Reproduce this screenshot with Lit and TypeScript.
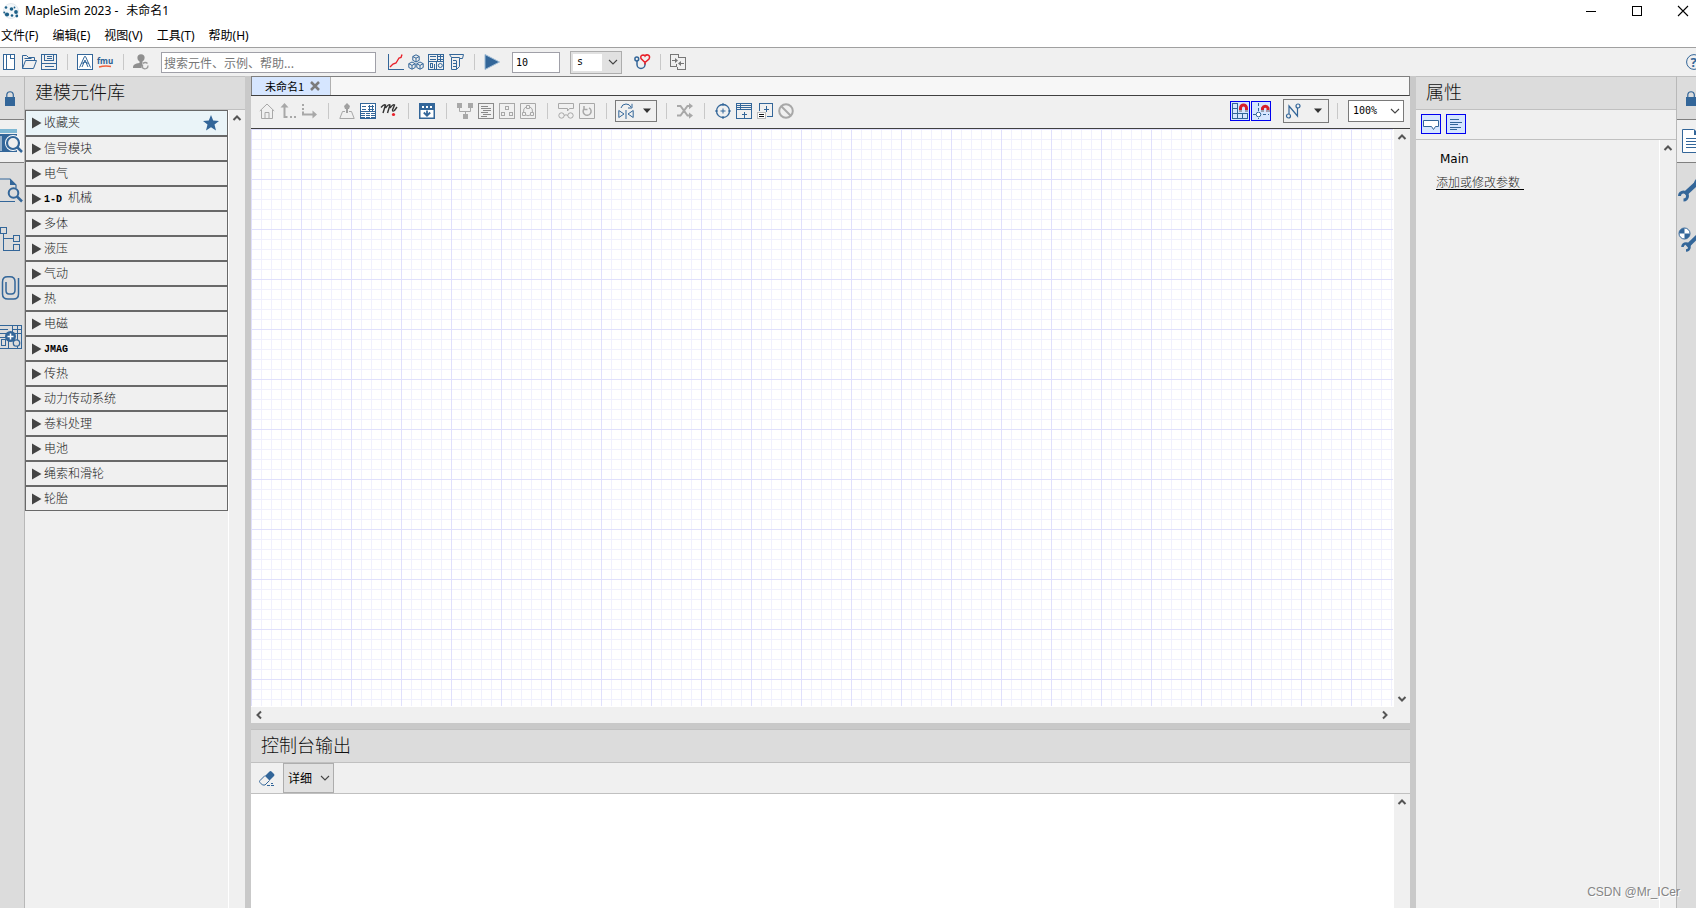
import { LitElement, html, svg, css, TemplateResult, SVGTemplateResult } from "lit";
import { customElement, property } from "lit/decorators.js";

type Glyph = SVGTemplateResult;

/* 16px toolbar glyphs */
const G: Record<string, Glyph> = {
  newDoc: svg`<g class="b c"><rect x="2.5" y="0.5" width="11" height="15" fill="#fff"/><path d="M5.5 1v14M9.5 .5v4h4"/></g>`,
  open: svg`<g class="b"><path d="M1.5 14.5v-13h4l2 2h6v3M1.500 14.500l3-8h11l-3 8zM3.500 4.500h7"/></g>`,
  save: svg`<g class="b c"><path d="M.5.5h15v15H.5zM3.500.5v6h9v-6M5.500 2.500h5M5.500 4.500h5M.5 9.500h15M3.500 12.500h9"/></g>`,
  mapleA: svg`<rect class="b" x=".5" y=".5" width="15" height="15" fill="#fff"/><path class="b" d="M2.500 13.500l5-11h1l5 11M5 13l3-7 3 7M4.500 9.500q3.500-3 7 0"/>`,
  fmu: svg`<text x="0" y="10" font-size="8" font-weight="700" font-family="Open Sans" fill="#2b5f93">fmu</text><path d="M2 13q6-1.500 12-.5" stroke="#f0603c" stroke-width="1.500" fill="none"/>`,
  user: svg`<circle cx="8" cy="3.800" r="3.600" fill="#8f8f8f"/><path d="M6.500 6h3v3l-1 5H0c0-3.500 2-4.500 6.500-5z" fill="#8f8f8f"/><path d="M10 9.500a3 3 0 0 1 4.500 0M15 11.500a3 3 0 0 1-5 2.500M9.500 10.500v4" fill="none" stroke="#999" stroke-width="1.300"/>`,
  chart: svg`<path class="b c" d="M.5 0v15.500H16"/><path d="M2 13l3-3 3-1 3-5 2-.5L14 .5" fill="none" stroke="#e8202a" stroke-width="1.400"/>`,
  cubes: svg`<g class="b"><path d="M8 .8l3.200 1.700v3.800L8 8 4.800 6.300V2.500zM4.800 2.500L8 4.200l3.200-1.700M8 4.200V8"/><path d="M4 8l3.200 1.700v3.800L4 15.200.8 13.500V9.700zM.8 9.700L4 11.400l3.200-1.700M4 11.400v3.800M12 8l3.200 1.700v3.800L12 15.200l-3.200-1.700V9.700zM8.800 9.700l3.200 1.700 3.200-1.700M12 11.400v3.800"/></g>`,
  panel: svg`<g class="b c"><path d="M.5.5h15v15H.5zM.5 7.500h15M9.500.5v7M12.500.5v7M2 2.500h6M2 5.500h6M9.500 2.500h6M9.500 5.500h6M2.500 9.500h2v4h-2zM6.500 9.500v5M8.500 7.500v8"/></g><circle class="b" cx="12.300" cy="11.500" r="2"/>`,
  scroll: svg`<g class="b"><path d="M1.500.5h14l-1 4h-3v8l-3 3H3.500V3.500L1.500.5M3.500 3.500h8v1M8.500 15.500v-9M5 6.500h3M5 9.500h3M5 12.500h3"/></g>`,
  play: svg`<path d="M1 .5v15L15.500 8z" fill="#336699"/><path d="M1 .5v15L15.500 8z" fill="none" stroke="#9dbbd6"/>`,
  steth: svg`<g class="b" stroke-width="1.500"><circle cx="2.800" cy="5" r="1.900"/><path d="M3 7v3.500a4 4 0 0 0 8 0V9"/></g><path d="M11 8.500L7 4.500q-1-3 2-3.500 1.500 0 2 1 1-1.500 3-1 2.500 1 1 4zM11 8.500v2" fill="none" stroke="#e8202a" stroke-width="1.500"/>`,
  swap: svg`<g fill="none" stroke="#777" class="c"><path d="M6.500 12.500h-6v-12h8v3M6.500 12.500V9.500M8.500 3.500h7v12h-8v-3M2 6.500h4M10 9.500h4"/></g><path d="M5 4l3 2.500L5 9zM11 7L8 9.500 11 12z" fill="#777"/>`,
  home: svg`<g class="g"><path d="M.8 8L8 1l7.200 7M2.500 7v8.500h11V7M6 15.500v-6h4v6"/></g>`,
  up: svg`<path class="g" stroke-width="2" d="M4.500 3v11h3"/><path d="M4.500 0l4 4.500h-8zM10 13h2v2h-2zM14 13h2v2h-2z" fill="#a8a8a8"/>`,
  down: svg`<path d="M1 1h2v2H1zM1 5h2v2H1zM11.500 7.500L16 11.500l-4.500 4z" fill="#a8a8a8"/><path class="g" stroke-width="2" d="M2 8.500v3h10"/>`,
  tree: svg`<path d="M8 0l3 3-1 3H9v4H7V6H6L5 3z" fill="#a0a0a0"/><path class="g" d="M6 8.500H3.500L.8 15.500h14.400L12.500 8.500H10"/>`,
  props: svg`<rect width="16" height="16" fill="#336699"/><path d="M1 1h14v7H1z" fill="#fff"/><path class="c" d="M2 3.500h4M2 6.500h4M8 3.500h6M8 6.500h6M9.500 2v6M12.500 2v6" stroke="#336699" fill="none"/><path class="c" d="M1 9.500h14M1 11.500h14M1 13.500h14M5.500 9v6M10.500 9v6" stroke="#fff" fill="none"/>`,
  script: svg`<path d="M0 4.500Q3 1 4.500 2L2 10M4.500 5Q8 .5 9 2L6.500 10M9 5Q12.500.5 13.500 2L11.500 7q0 2 2 .5L16 4" fill="none" stroke="#333" stroke-width="1.400"/><circle cx="12.500" cy="11.500" r="1.600" fill="#e8202a"/>`,
  collapse: svg`<path d="M0 0h16v16H0z" fill="#336699"/><path d="M1.500 7h13v7.500h-13z" fill="#fff"/><path d="M3 3h2v2H3zM7 3h2v2H7zM11 3h2v2h-2z" fill="#fff"/><path d="M8 7.500v5M4.800 9.500L8 12.700l3.200-3.200" stroke="#336699" stroke-width="1.800" fill="none"/>`,
  nodes: svg`<path d="M0 0h5v5H0zM11 0h5v5h-5zM6 11h5v5H6z" fill="#a8a8a8"/><path class="g" d="M2.500 5v3.500h11V5M8.500 8.500V11"/>`,
  text: svg`<g stroke="#8a8a8a" fill="none" class="c"><path d="M.5.5h15v15H.5zM3 3.500h7M3 5.500h10M5 7.500h8M3 9.500h7M5 11.500h8M3 13.500h6"/></g>`,
  boxes: svg`<g class="g c"><path d="M.5.5h15v15H.5zM6.500 3.500h3v3h-3zM2.500 9.500h3v3h-3zM10.500 9.500h3v3h-3z"/></g>`,
  linked: svg`<g class="g"><path d="M.5.5h15v15H.5zM6.500 2.500h3v3h-3zM2.500 9.500h3v3h-3zM10.500 9.500h3v3h-3zM6 4q-3 1-2.500 5.500M10 4q3 1 2.500 5.500M6 12q2 1.500 4 0"/></g>`,
  glasses: svg`<g class="g"><path d="M.5.5h15v5h-4L9.500 8V5.500h-9zM6 12.500q2-1.500 4 0"/><circle cx="3.500" cy="12.500" r="2.700"/><circle cx="12.500" cy="12.500" r="2.700"/></g>`,
  reload: svg`<path class="g" d="M.5.5h15v15H.5z"/><path class="g" stroke-width="1.500" d="M10 4.800a4 4 0 1 1-4.500.5M5 3v3.500h3.500"/>`,
  mirror: svg`<g class="b"><path d="M.8 7.500v7L6 11zM15.200 7.500v7L10 11zM8 7v9M3 5q1-4 5-4 3.500 0 5 3M14 .8V5h-4"/></g>`,
  shuffle: svg`<path d="M0 3h3.500l7 9.500H13M0 12.500h3.500l7-9.500H13" fill="none" stroke="#a8a8a8" stroke-width="2"/><path d="M12 0l4 3-4 3.300zM12 9.500l4 3-4 3.300z" fill="#a8a8a8"/>`,
  target: svg`<g class="b"><circle cx="8" cy="8" r="6.500" stroke-width="1.300"/><path d="M8 0v3M8 13v3M0 8h3M13 8h3M8 5.500v5M5.500 8h5"/></g>`,
  tableAdd: svg`<g class="b c"><path d="M.5.5h15v15H.5zM.5 2.500h15M.5 4.500h15M.5 6.500h15M4.500.5v6M8.500 8.500v6M6 11.500h5"/></g>`,
  eqAdd: svg`<g class="b c"><path d="M2.500 8V.5h13v13H10M9.500 3v6M7 6.500h5"/></g><rect x=".5" y="9.500" width="8" height="6" fill="#fff" stroke="#bbb"/><path d="M2 11.500h5M2 13.500h5" stroke="#111"/>`,
  none: svg`<circle cx="8" cy="8" r="6.800" fill="none" stroke="#a8a8a8" stroke-width="2"/><path d="M3.500 3.500l9 9" stroke="#a8a8a8" stroke-width="2"/>`,
  gridSnap: svg`<g class="b c"><path d="M.5.5h5v15h-5zM.5 5.500h5M.5 10.500h15v5H.5zM10.500 10.500v5"/></g><path d="M8.500 9V5a3 3 0 0 1 6 0v4" fill="none" stroke="#d81e28" stroke-width="3"/><path d="M8.500 7v2M14.500 7v2" stroke="#9aa4b4" stroke-width="3"/>`,
  lineSnap: svg`<path class="b" stroke-dasharray="3 2" d="M5.500 0v16M0 11.500h16"/><circle cx="5.500" cy="11.500" r="2.300" class="b" fill="#fff"/><path d="M9.500 9V5a3 3 0 0 1 5.500 0v4" fill="none" stroke="#d81e28" stroke-width="3"/><path d="M9.500 7v2M15 7v2" stroke="#9aa4b4" stroke-width="3"/>`,
  route: svg`<g class="b" stroke-width="1.200"><path d="M3 11V3l8.500 10V5"/><circle cx="2.500" cy="13" r="2"/><circle cx="12" cy="3" r="2"/></g>`,
  callout: svg`<path class="b" fill="#fff" d="M.5 4.500h15v6h-3l-2 3-2-3h-8z"/>`,
  lines: svg`<path class="b c" d="M2 3.500h9M2 6.500h12M2 8.500h8M2 11.500h11M2 13.500h7"/>`,
  eraser: svg`<path d="M6 6l4.500-4.500q1-1 2 0l2.500 2.500q1 1 0 2L10.500 10.500z" fill="#336699"/><path class="b" d="M6 5.500L1 10.500q-1 1 0 2l2.500 2.500h2.500L10.500 10.500"/><path class="b" d="M8 15.500h8M12 13.500h2" stroke-dasharray="3 1"/>`,
  star: svg`<path d="M8 0l2.200 5.600 5.800.3-4.500 3.700L13 15.500 8 12.200 3 15.500l1.500-5.900L0 5.900l5.800-.3z" fill="#336699"/>`,
  close: svg`<path d="M4 4l8 8M12 4l-8 8" stroke="#7c7c7c" stroke-width="2.500"/>`,
  help: svg`<circle class="b" cx="8" cy="8" r="7.400"/><text x="4.500" y="13" font-size="13" font-weight="700" font-family="Open Sans" fill="#336699">?</text>`,
  min: svg`<path d="M3 8.500h10" stroke="#000" class="c"/>`,
  max: svg`<path d="M3.500 3.500h9v9h-9z" stroke="#000" fill="none" class="c"/>`,
  quit: svg`<path d="M3 3l10 10M13 3L3 13" stroke="#000" stroke-width="1.100"/>`,
  logo: svg`<circle cx="8" cy="8" r="7.500" fill="#f3f7fa" stroke="#d5dde5" stroke-width=".6"/><g fill="#1d6088"><circle cx="3" cy="4.500" r="1.300"/><circle cx="8.500" cy="6" r="1.800"/><circle cx="13" cy="9" r="1.900"/><circle cx="4" cy="11.500" r="2.100"/><circle cx="9" cy="12.500" r="1.300"/><circle cx="13.800" cy="13" r="1.400"/><circle cx="1.300" cy="9.500" r="1"/><circle cx="11.500" cy="4.500" r=".9"/></g>`,
  arrowUp: svg`<path d="M4.500 10L8 6.500l3.500 3.500" fill="none" stroke="#555" stroke-width="2"/>`,
  arrowDown: svg`<path d="M4.500 6L8 9.500 11.500 6" fill="none" stroke="#555" stroke-width="2"/>`,
  arrowLeft: svg`<path d="M10 4.500L6.500 8l3.500 3.500" fill="none" stroke="#555" stroke-width="2"/>`,
  arrowRight: svg`<path d="M6 4.500L9.500 8 6 11.500" fill="none" stroke="#555" stroke-width="2"/>`,
  chevron: svg`<path d="M4 6l4 4 4-4" fill="none" stroke="#444" stroke-width="1.100"/>`,
  caret: svg`<path d="M4 5.500h8L8 10z" fill="#333"/>`,
  tri: svg`<path d="M4 2.500v11L13.500 8z" fill="#444"/>`,
};

/* 24px glyphs of the two side rails */
const R: Record<string, Glyph> = {
  lock: svg`<path d="M6.800 12V8.500a3.300 3.300 0 0 1 6.500 0V12" fill="none" stroke="#336699" stroke-width="1.200"/><path d="M5 11h10v9H5z" fill="#336699"/>`,
  lockRight: svg`<path d="M10.800 12V8.500a3.300 3.300 0 0 1 6.500 0V12" fill="none" stroke="#336699" stroke-width="1.200"/><path d="M9 11h10v9H9z" fill="#336699"/>`,
  library: svg`<path d="M0 0h17v4H0z" fill="#7fb8d4"/><path d="M0 5h17v1H0zM0 6h7v17H0z" fill="#336699"/><path d="M1 7v15" stroke="#fff"/><path d="M7 6h10v17H7z" fill="#336699"/><circle cx="13" cy="14" r="6" fill="#efefef" stroke="#fff" stroke-width="4"/><circle cx="13" cy="14" r="6" fill="#efefef" stroke="#336699" stroke-width="2.200"/><path d="M17 18l5 5" stroke="#336699" stroke-width="2.500"/>`,
  project: svg`<path d="M0 1h10l6 6v3M0 23.500h15" fill="none" stroke="#336699" stroke-width="1.200"/><path d="M10 1v6h6z" fill="#336699"/><circle cx="13.500" cy="15" r="4.800" fill="none" stroke="#336699" stroke-width="2"/><path d="M17 18.500l5 5" stroke="#336699" stroke-width="2.500"/>`,
  hierarchy: svg`<g class="b c"><path d="M.5.5h6v6h-6zM13.500 8.500h6v6h-6zM13.500 17.500h6v6h-6zM3.500 7v16.500h10M3.500 11.500h10"/></g>`,
  clip: svg`<path class="b" stroke-width="1.500" d="M18.500 2v16q0 5-5 5H8q-5.500 0-5.500-5V6q0-5.200 5-5.200h2.500q5 0 5 5V14q0 4-3.500 4h-2.500Q6 18 6 14.500V6"/>`,
  addParts: svg`<g class="b c"><path d="M0 .5h21.500v23H0M0 4.500h8M0 8.500h8M12.500.5v7M17.500.5v23M13 4.500h8M13 8.500h8M1.500 14.500h4v6h-4zM8.500 16v8M0 12.500h6"/></g><circle cx="10.500" cy="11.500" r="5.500" fill="#336699"/><path d="M7.500 11.500h6M10.500 8.500v6" stroke="#fff" stroke-width="1.500"/><circle cx="16.500" cy="18" r="3.200" fill="#dcdcdc" stroke="#336699" stroke-width="1.300"/>`,
  sheet: svg`<path d="M5.500.5h11l6 6v17h-17z" fill="#fff" stroke="#336699"/><path d="M17 0v6h6z" fill="#336699"/><path class="b c" d="M9 9.500h14M9 12.500h14M9 15.500h14M9 18.500h14"/>`,
  wrench: svg`<path d="M8 16L20 5" stroke="#336699" stroke-width="4.500"/><path d="M19 1q-3 3-2 7l7 1" fill="#336699"/><path d="M10.500 18a4 4 0 1 1-4-4" fill="none" stroke="#336699" stroke-width="3" transform="rotate(180 6.500 18)"/>`,
  wheelWrench: svg`<circle cx="7.500" cy="6.500" r="5.500" fill="#fff" stroke="#336699"/><path d="M7.500 6.500V1a5.500 5.500 0 0 0-5.500 5.500zM7.500 6.500V12A5.500 5.500 0 0 0 13 6.500z" fill="#336699"/><path d="M10 19.500L23 7" stroke="#336699" stroke-width="4"/><path d="M12.500 20a3.500 3.500 0 1 1-3.500-3.500" fill="none" stroke="#336699" stroke-width="2.600" transform="rotate(180 9 20)"/>`,
};

const base = css`
  :host { box-sizing: border-box; }
  *, *::before { box-sizing: border-box; }
  svg { display: block; flex: none; overflow: visible; }
  .b { stroke: #336699; }
  .b:not([fill]) { fill: none; }
  .b path:not([fill]), .b circle:not([fill]) { fill: none; }
  .g { stroke: #a8a8a8; fill: none; }
  .c { shape-rendering: crispEdges; }
  button {
    border: 0; padding: 0; margin: 0; background: none; font: inherit; color: inherit;
    display: flex; align-items: center; justify-content: center;
  }
`;

const icon = (g: Glyph, size = 16): TemplateResult =>
  html`<svg width=${size} height=${size} viewBox="0 0 ${size} ${size}" aria-hidden="true">${g}</svg>`;

const tool = (name: string, label: string, cls = "tool"): TemplateResult =>
  html`<button class=${cls} aria-label=${label} title=${label}>${icon(G[name])}</button>`;

const sep = html`<span class="sep"></span>`;

@customElement("side-rail")
class SideRail extends LitElement {
  @property({ attribute: false }) items: [string, string][] = [];
  static styles = [base, css`
    :host { display: flex; flex-direction: column; background: #dcdcdc; overflow: hidden; border-top: 1px solid #c0c0c0; }
    button { height: 49px; width: 24px; flex: none; }
    .lock { height: 42px; }
    .active { height: 44px; width: 100%; justify-content: flex-start; background: #f0f0f0; border: solid #808080; border-width: 1px 0; margin-bottom: 2px; }
  `];
  render() {
    return this.items.map(([name, label], i) =>
      html`<button class=${i === 0 ? "lock" : i === 1 ? "active" : ""} aria-label=${label} title=${label}>${icon(R[name], 24)}</button>`);
  }
}

@customElement("scroll-strip")
class ScrollStrip extends LitElement {
  @property({ type: Boolean, reflect: true }) horizontal = false;
  @property({ type: Boolean }) end = false;
  static styles = [base, css`
    :host { display: flex; flex-direction: column; justify-content: space-between; width: 16px; flex: none; background: #f0f0f0; }
    :host([horizontal]) { flex-direction: row; width: auto; height: 16px; }
  `];
  render() {
    const [a, z] = this.horizontal ? ["arrowLeft", "arrowRight"] : ["arrowUp", "arrowDown"];
    return html`<button aria-label="back">${icon(G[a])}</button>
      ${this.end ? html`<button aria-label="forward">${icon(G[z])}</button>` : ""}`;
  }
}

const LIBRARY = ["收藏夹", "信号模块", "电气", "1-D 机械", "多体", "液压", "气动", "热", "电磁", "JMAG", "传热", "动力传动系统", "卷料处理", "电池", "绳索和滑轮", "轮胎"];

@customElement("app-root")
class AppRoot extends LitElement {
  static styles = [base, css`
    :host {
      display: flex; flex-direction: column; height: 100vh; overflow: hidden; position: relative;
      background: #fff; color: #000; font: 12px/16px "Noto Sans", "Noto Sans CJK SC", sans-serif;
    }
    .title { display: flex; align-items: center; height: 22px; padding-left: 3px; gap: 6px; flex: none; }
    .title h1 { font: inherit; margin: 0; flex: 1; display: flex; gap: 8px; }
    .winbtns { display: flex; margin-right: -10px; }
    .winbtns button { width: 46px; height: 20px; }
    .menu { display: flex; height: 25px; gap: 14px; padding: 3px 0 0 1px; align-items: center; flex: none; }
    .bar { display: flex; align-items: center; flex: none; background: #f0f0f0; }
    .main-bar { height: 29px; border-top: 1px solid #a0a0a0; gap: 4px; padding-left: 1px; overflow: hidden; }
    .sep { width: 1px; height: 16px; background: #c8c8c8; margin: 0 5px 0 6px; flex: none; }
    .tool { width: 16px; height: 16px; flex: none; }
    input, select {
      font: 10px/14px "DejaVu Sans Mono", "Noto Sans CJK SC", monospace; color: #000; margin: 0;
      border: 1px solid #a0a0a8; border-radius: 0; background: #fff; outline: 0; appearance: none;
    }
    .search { width: 215px; height: 21px; padding: 0 2px; margin: 0 8px 0 8px; font: 12px/16px "Noto Sans CJK SC", sans-serif; }
    .search::placeholder { color: #777; opacity: 1; }
    .time { width: 48px; height: 21px; padding: 0 3px; margin: 0 6px 0 8px; }
    .pick { display: grid; align-items: center; flex: none; }
    .pick select, .pick svg { grid-area: 1 / 1; }
    .pick svg { justify-self: end; margin-right: 1px; pointer-events: none; }
    .unit select { width: 52px; height: 23px; padding: 0 6px; border: 1px solid #adadad; background: linear-gradient(#fff, #fff) 2px 2px / 29px 17px no-repeat #e1e1e1; }
    .unit { margin-right: 8px; }
    .zoom select { width: 56px; height: 22px; padding: 0 4px; border-color: #7a7a7a; }
    .help { margin-left: auto; margin-right: -6px; }
    .work { flex: 1; min-height: 0; display: grid; grid-template-columns: 24px 221px 6px minmax(0, 1fr) 6px 260px 20px; }
    .split { background: #c9c9c9; }
    .right-rail { border-left: 1px solid #b8b8b8; }
    .panel { display: flex; flex-direction: column; min-height: 0; min-width: 0; background: #f0f0f0; border-top: 1px solid #c0c0c0; }
    .left { border-left: 1px solid #b8b8b8; }
    h2 {
      margin: 0; height: 33px; flex: none; padding: 0 10px; background: #dcdcdc; border-bottom: 1px solid #c0c0c0;
      font: 300 18px/28px "Noto Sans CJK SC", sans-serif; color: #111;
    }
    .scroller { display: flex; flex: 1; min-height: 0; }
    .content { flex: 1; min-width: 0; border-right: 1px solid #fff; }
    ul { list-style: none; margin: 0; padding: 0; border: 1px solid #696969; border-bottom: 0; }
    li { height: 25px; border-bottom: 1px solid #696969; border-top: 1px solid #696969; }
    li:first-child { border-top: 0; background: #eaf4f8; }
    li button { width: 100%; height: 23px; justify-content: flex-start; padding: 0 8px 0 2px; color: #222; font-family: "Noto Sans CJK SC", sans-serif; font-weight: 300; }
    li button span { flex: 1; text-align: left; padding-bottom: 2px; }
    li b { font: 700 10px/14px "Liberation Mono", monospace; color: #000; margin-right: 6px; }
    .center { display: flex; flex-direction: column; min-width: 0; min-height: 0; }
    .tabs { height: 20px; flex: none; background: #f7f7f7; border: solid #808080; border-width: 1px 1px 1px 0; border-bottom-color: #404040; display: flex; }
    .tab { display: flex; align-items: center; width: 80px; padding: 0 0 1px 13px; gap: 3px; background: #d6e6ff; border: solid #808080; border-width: 0 1px; border-right-color: #b0b0b0; font: 11px/16px "Noto Sans CJK SC", sans-serif; white-space: nowrap; }
    .canvas-bar { height: 33px; padding: 0 6px 2px 8px; gap: 5px; border-bottom: 1px solid #404040; }
    .drop { width: 42px; height: 22px; margin: 0 -2px 0 -2px; border: 1px solid #7a7a7a; gap: 5px; flex: none; }
    .route { width: 46px; height: 24px; margin: 0 -3px 0 7px; gap: 8px; }
    .toggle { width: 20px; height: 20px; border: 1px solid #0000f0; background: #d6e6ff; flex: none; }
    .snap { display: flex; gap: 1px; margin-left: auto; }
    .canvas {
      flex: 1; margin: 0 1px 1px 0;
      background:
        repeating-linear-gradient(90deg, #e0e0fc 0 1px, transparent 1px 50px),
        repeating-linear-gradient(#e0e0fc 0 1px, transparent 1px 50px),
        repeating-linear-gradient(90deg, #f0f0fd 0 1px, transparent 1px 10px),
        repeating-linear-gradient(#f0f0fd 0 1px, #fff 1px 10px);
    }
    .corner { display: flex; }
    .corner scroll-strip { flex: 1; }
    .corner span { width: 17px; background: #f0f0f0; }
    .console { height: 185px; flex: none; border-top: 6px solid #c9c9c9; display: flex; flex-direction: column; }
    .console .bar { height: 31px; padding-left: 8px; gap: 8px; border-bottom: 1px solid #c0c0c0; }
    .console h2 { height: 34px; border-top: 1px solid #c0c0c0; }
    .level select { width: 51px; height: 30px; padding: 0 4px; border: 1px solid #adadad; background: #e1e1e1; font: 12px/16px "Noto Sans CJK SC", sans-serif; }
    textarea { flex: 1; border: 0; margin: 0; padding: 4px; resize: none; outline: 0; background: #fff; }
    .props-bar { height: 30px; padding: 0 0 1px 5px; gap: 5px; border-bottom: 1px solid #c0c0c0; }
    .props { padding: 11px 20px; }
    .props p { margin: 0 0 8px; padding-left: 4px; font-family: "DejaVu Sans", sans-serif; }
    .props a { color: #222; text-decoration: none; border-bottom: 1px solid #000; padding-right: 4px; font: 300 12px/14px "Noto Sans CJK SC", sans-serif; display: inline-block; }
    .mark { position: absolute; right: 16px; bottom: 8px; font: 12px/16px "Liberation Sans", sans-serif; color: #858585; text-shadow: 1px 1px 0 #fff; }
  `];

  render() {
    return html`
      <header class="title">${icon(G.logo)}<h1><span>MapleSim 2023 -</span><span>未命名1</span></h1>
        <div class="winbtns">${tool("min", "最小化", "")}${tool("max", "最大化", "")}${tool("quit", "关闭", "")}</div>
      </header>
      <nav class="menu">${["文件(F)", "编辑(E)", "视图(V)", "工具(T)", "帮助(H)"].map((m) => html`<button>${m}</button>`)}</nav>
      <div class="bar main-bar">
        ${tool("newDoc", "新建")}${tool("open", "打开")}${tool("save", "保存")}${sep}
        ${tool("mapleA", "Maple")}${tool("fmu", "FMU")}${sep}
        ${tool("user", "登录")}
        <input class="search" type="text" aria-label="搜索" placeholder="搜索元件、示例、帮助...">
        ${tool("chart", "图表")}${tool("cubes", "模型")}${tool("panel", "面板")}${tool("scroll", "脚本")}${sep}
        ${tool("play", "运行")}
        <input class="time" type="text" aria-label="仿真时间" .value=${"10"}>
        <div class="pick unit"><select aria-label="单位"><option>s</option></select>${icon(G.chevron)}</div>
        ${tool("steth", "诊断")}${sep}${tool("swap", "比较")}
        ${tool("help", "帮助", "tool help")}
      </div>
      <main class="work">
        <side-rail .items=${[["lock", "锁定"], ["library", "库"], ["project", "项目"], ["hierarchy", "层次"], ["clip", "附件"], ["addParts", "添加"]]}></side-rail>
        <section class="panel left">
          <h2>建模元件库</h2>
          <div class="scroller">
            <div class="content"><ul>${LIBRARY.map((name, i) => {
              const m = /^([\w-]+)\s?(.*)$/.exec(name);
              return html`<li><button>${icon(G.tri)}<span>${m ? html`<b>${m[1]}</b>${m[2]}` : name}</span>${i === 0 ? icon(G.star) : ""}</button></li>`;
            })}</ul></div>
            <scroll-strip></scroll-strip>
          </div>
        </section>
        <div class="split"></div>
        <section class="center">
          <div class="tabs"><div class="tab"><span>未命名1</span>${tool("close", "关闭标签")}</div></div>
          <div class="bar canvas-bar">
            ${tool("home", "主页")}${tool("up", "上一级")}${tool("down", "下一级")}${sep}
            ${tool("tree", "树")}${tool("props", "属性")}${tool("script", "方程")}${sep}
            ${tool("collapse", "折叠")}${sep}
            ${tool("nodes", "节点")}${tool("text", "文本")}${tool("boxes", "子系统")}${tool("linked", "共享子系统")}${sep}
            ${tool("glasses", "查看")}${tool("reload", "刷新")}${sep}
            <button class="drop" aria-label="镜像">${icon(G.mirror)}${icon(G.caret)}</button>${sep}
            ${tool("shuffle", "交换")}${sep}
            ${tool("target", "探针")}${tool("tableAdd", "添加表")}${tool("eqAdd", "添加方程")}${tool("none", "禁用")}
            <div class="snap">${tool("gridSnap", "对齐网格", "toggle")}${tool("lineSnap", "对齐线", "toggle")}</div>
            <button class="drop route" aria-label="布线">${icon(G.route)}${icon(G.caret)}</button>${sep}
            <div class="pick zoom"><select aria-label="缩放"><option>100%</option></select>${icon(G.chevron)}</div>
          </div>
          <div class="scroller"><div class="canvas"></div><scroll-strip end></scroll-strip></div>
          <div class="corner"><scroll-strip horizontal end></scroll-strip><span></span></div>
          <section class="console">
            <h2>控制台输出</h2>
            <div class="bar">${tool("eraser", "清除")}
              <div class="pick level"><select aria-label="级别"><option>详细</option></select>${icon(G.chevron)}</div>
            </div>
            <div class="scroller"><textarea aria-label="控制台输出" readonly></textarea><scroll-strip></scroll-strip></div>
          </section>
        </section>
        <div class="split"></div>
        <section class="panel">
          <h2>属性</h2>
          <div class="bar props-bar">${tool("callout", "提示", "toggle")}${tool("lines", "列表", "toggle")}</div>
          <div class="scroller">
            <div class="content props"><p>Main</p><a href="#">添加或修改参数</a></div>
            <scroll-strip></scroll-strip>
          </div>
        </section>
        <side-rail class="right-rail" .items=${[["lockRight", "锁定"], ["sheet", "属性"], ["wrench", "设置"], ["wheelWrench", "仿真设置"]]}></side-rail>
      </main>
      <div class="mark">CSDN @Mr_ICer</div>
    `;
  }
}
